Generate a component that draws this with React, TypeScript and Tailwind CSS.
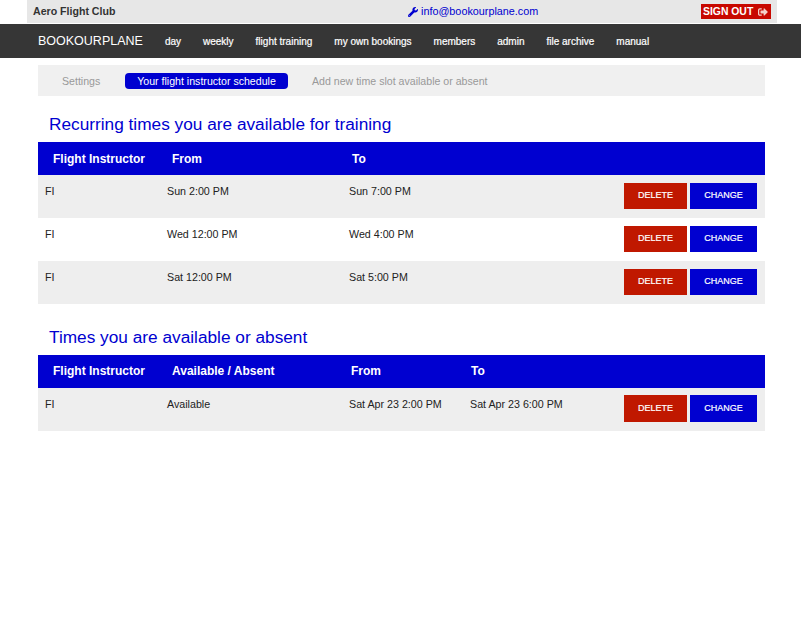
import { FaSignOutAlt, FaWrench } from "react-icons/fa";

const navLinks = ["day", "weekly", "flight training", "my own bookings", "members", "admin", "file archive", "manual"];

const recurring = [
  { from: "Sun 2:00 PM", to: "Sun 7:00 PM" },
  { from: "Wed 12:00 PM", to: "Wed 4:00 PM" },
  { from: "Sat 12:00 PM", to: "Sat 5:00 PM" },
];

function RowButtons({ single }: { single?: boolean }) {
  const size = single ? "h-[27px]" : "h-[26px]";
  return (
    <div className={`ml-auto mr-2 flex gap-[3px] ${single ? "pt-[7px]" : "pt-2"}`}>
      <button className={`${size} w-[63px] bg-[#c01800] text-[9px] text-white [-webkit-text-stroke:0.2px_white]`}>DELETE</button>
      <button className={`${size} w-[67px] bg-[#0000d0] text-[9px] text-white [-webkit-text-stroke:0.2px_white]`}>CHANGE</button>
    </div>
  );
}

export default function App() {
  return (
    <div className="min-h-[629px] bg-white font-['Liberation_Sans',Arial,sans-serif] text-[#222]">
      {/* Top bar */}
      <div className="mx-[27px] flex h-[23px] w-[750px] items-center bg-[#e7e7e7]">
        <span className="ml-[6px] w-[375px] text-[10.6px] font-bold text-[#333]">Aero Flight Club</span>
        <a className="flex items-center gap-[3px] text-[10.8px] text-[#0000d0]">
          <FaWrench className="h-[10px] w-[10px]" />
          info@bookourplane.com
        </a>
        <a className="mr-[6px] ml-auto flex h-[15px] w-[70px] items-center gap-[5px] whitespace-nowrap bg-[#c80800] pl-[2px] text-[10.4px] font-bold text-white">
          SIGN OUT
          <FaSignOutAlt className="h-[10px] w-[10px] text-[#f3d0c8]" />
        </a>
      </div>

      {/* Main nav */}
      <div className="mt-px flex h-[34px] items-center bg-[#363636] pl-[38px] text-white">
        <span className="mr-[22px] text-[12.5px]">BOOKOURPLANE</span>
        <div className="flex gap-[22px] text-[10px] [-webkit-text-stroke:0.2px_white]">
          {navLinks.map((link) => (
            <a key={link}>{link}</a>
          ))}
        </div>
      </div>

      {/* Sub nav */}
      <div className="mx-[38px] mt-[7px] flex h-[31px] w-[727px] items-center bg-[#f0f0f0] text-[10.6px] text-[#999]">
        <span className="ml-[24px] w-[63px] pt-[2px]">Settings</span>
        <span className="flex h-[16px] w-[163px] items-center justify-center rounded-sm bg-[#0000d0] pt-[2px] text-white">
          Your flight instructor schedule
        </span>
        <span className="ml-[24px] pt-[2px]">Add new time slot available or absent</span>
      </div>

      {/* Recurring times */}
      <div className="mx-[38px] w-[727px]">
        <h2 className="mt-[17px] ml-[11px] h-[29px] text-[17.25px] leading-[22px] text-[#0000d0]">
          Recurring times you are available for training
        </h2>
        <div className="flex h-[33px] items-center bg-[#0000d0] text-[12px] font-bold text-white">
          <span className="ml-[15px] w-[119px]">Flight Instructor</span>
          <span className="w-[180px]">From</span>
          <span>To</span>
        </div>
        {recurring.map((row, i) => (
          <div key={row.from} className={`flex h-[43px] text-[10.7px] ${i % 2 === 0 ? "bg-[#eeeeee]" : "bg-white"}`}>
            <span className="ml-[7px] w-[122px] pt-[8px]">FI</span>
            <span className="w-[182px] pt-[8px]">{row.from}</span>
            <span className="pt-[8px]">{row.to}</span>
            <RowButtons />
          </div>
        ))}

        {/* One-off times */}
        <h2 className="mt-[22px] ml-[11px] h-[29px] text-[17.25px] leading-[22px] text-[#0000d0]">
          Times you are available or absent
        </h2>
        <div className="flex h-[33px] items-center bg-[#0000d0] pb-px text-[12px] font-bold text-white">
          <span className="ml-[15px] w-[119px]">Flight Instructor</span>
          <span className="w-[179px]">Available / Absent</span>
          <span className="w-[120px]">From</span>
          <span>To</span>
        </div>
        <div className="flex h-[43px] bg-[#eeeeee] text-[10.7px]">
          <span className="ml-[7px] w-[122px] pt-[8px]">FI</span>
          <span className="w-[182px] pt-[8px]">Available</span>
          <span className="w-[121px] pt-[8px]">Sat Apr 23 2:00 PM</span>
          <span className="pt-[8px]">Sat Apr 23 6:00 PM</span>
          <RowButtons single />
        </div>
      </div>
    </div>
  );
}
